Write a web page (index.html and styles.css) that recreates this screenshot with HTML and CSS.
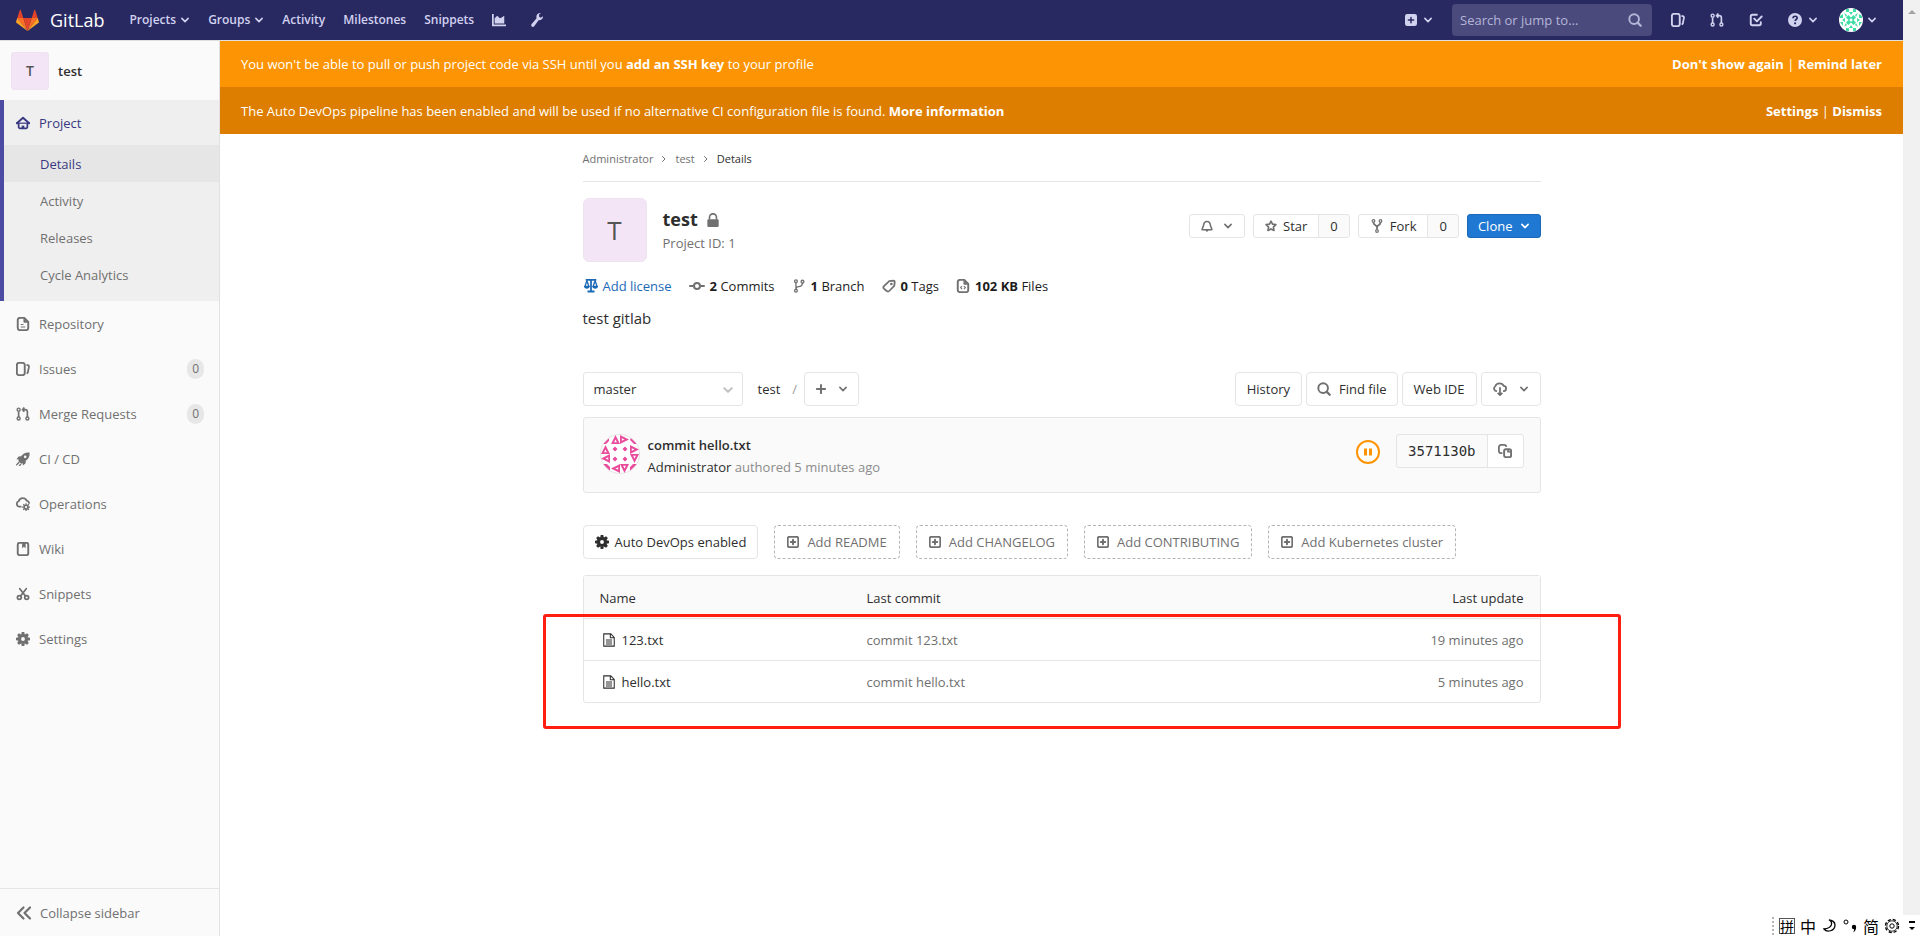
FILE: index.html
```html
<!DOCTYPE html>
<html lang="en">
<head>
<meta charset="utf-8">
<title>Administrator / test · GitLab</title>
<link rel="stylesheet" href="styles.css">
</head>
<body>
<svg class="sprite" aria-hidden="true">
  <symbol id="chevron" viewBox="0 0 16 16"><path d="M3 5.5l5 5 5-5" fill="none" stroke="currentColor" stroke-width="2.6" stroke-linecap="round" stroke-linejoin="round"/></symbol>
  <symbol id="angle-right" viewBox="0 0 16 16"><path d="M5 3l5 5-5 5" fill="none" stroke="currentColor" stroke-width="2" stroke-linecap="round" stroke-linejoin="round"/></symbol>
  <symbol id="plus-solid" viewBox="0 0 16 16"><path fill-rule="evenodd" d="M3 0h10a3 3 0 0 1 3 3v10a3 3 0 0 1-3 3H3a3 3 0 0 1-3-3V3a3 3 0 0 1 3-3zm4 7H4.500a1 1 0 0 0 0 2H7v2.500a1 1 0 0 0 2 0V9h2.500a1 1 0 0 0 0-2H9V4.500a1 1 0 0 0-2 0z"/></symbol>
  <symbol id="plus-square" viewBox="0 0 16 16"><rect x="1" y="1" width="14" height="14" rx="2.500" fill="none" stroke="currentColor" stroke-width="2.400"/><path d="M8 5v6M5 8h6" stroke="currentColor" stroke-width="2.600" stroke-linecap="round"/></symbol>
  <symbol id="search" viewBox="0 0 16 16"><circle cx="7" cy="7" r="5.500" fill="none" stroke="currentColor" stroke-width="2.200"/><path d="M11 11l3.500 3.500" stroke="currentColor" stroke-width="2.600" stroke-linecap="round"/></symbol>
  <symbol id="issues" viewBox="0 0 16 16"><rect x="1" y="1" width="9" height="14" rx="2.500" fill="none" stroke="currentColor" stroke-width="2.200"/><path d="M12 3.200l1.500.4c1 .3 1.500 1 1.300 2L13.500 12l-1.200 1.300" fill="none" stroke="currentColor" stroke-width="2"/></symbol>
  <symbol id="merge" viewBox="0 0 16 16"><g fill="none" stroke="currentColor" stroke-width="1.600"><circle cx="3" cy="3" r="1.700"/><circle cx="3" cy="13.200" r="1.700"/><circle cx="13" cy="13.200" r="1.700"/><path d="M3 5v6.500M13 11.500V5.500c0-1.500-1-2.500-2.500-2.500H8M9.500 .5L7.500 3l2 2.500" stroke-width="1.900"/></g></symbol>
  <symbol id="todo" viewBox="0 0 16 16"><path d="M9 2H4a2 2 0 0 0-2 2v8a2 2 0 0 0 2 2h7.500a2 2 0 0 0 2-2v-1.500M6 6.500l3 3L14.500 4" fill="none" stroke="currentColor" stroke-width="2.200" stroke-linecap="round" stroke-linejoin="round"/></symbol>
  <symbol id="question" viewBox="0 0 16 16"><circle cx="8" cy="8" r="8"/><path d="M5.700 6c.1-1.500 1.100-2.300 2.400-2.300 1.400 0 2.400.8 2.400 2 0 1.700-2.300 1.700-2.300 3.400" fill="none" stroke="#292961" stroke-width="1.900"/><circle cx="8.100" cy="11.800" r="1.250" fill="#292961"/></symbol>
  <symbol id="chart" viewBox="0 0 16 16"><path d="M0 1h2v12h14v2H0zM3 6l3-3 3 3 2-1 3-2v9H3z"/></symbol>
  <symbol id="wrench" viewBox="0 0 16 16"><path d="M14.800 3.800l-2.500 1.700-2-1.400L10.500 1.500 12.500.1C10 -.4 7.500 1.300 7.300 4c0 .7 0 1.400.3 2L1.900 12.600c-.8.900-.6 2.100.1 2.800.9.700 2.100.6 2.800-.3l5-6.800c2.900.3 5.300-1.700 5-4.500z"/></symbol>
  <symbol id="home" viewBox="0 0 16 16"><path d="M1 8.300L8 2l7 6.300" fill="none" stroke="currentColor" stroke-width="2.200" stroke-linecap="round" stroke-linejoin="round"/><path d="M0 7.500h16v1.400H0z"/><path d="M3 8v4.500a1.500 1.500 0 0 0 1.500 1.500h7a1.500 1.500 0 0 0 1.500-1.500V8" fill="none" stroke="currentColor" stroke-width="2"/><path d="M6.500 11h3v3h-3z"/></symbol>
  <symbol id="doc" viewBox="0 0 16 16"><path d="M9.500 1H4.500A2.500 2.500 0 0 0 2 3.500v9A2.500 2.500 0 0 0 4.500 15h7a2.500 2.500 0 0 0 2.500-2.500V5.500z" fill="none" stroke="currentColor" stroke-width="2.200" stroke-linejoin="round"/><path d="M8.500 1v4.500a1 1 0 0 0 1 1H14zM5.500 8h3v1.200h-3zM5.500 10.800h5V12h-5z"/></symbol>
  <symbol id="doc-code" viewBox="0 0 16 16"><path d="M9.500 1H4.500A2.500 2.500 0 0 0 2 3.500v9A2.500 2.500 0 0 0 4.500 15h7a2.500 2.500 0 0 0 2.500-2.500V5.500z" fill="none" stroke="currentColor" stroke-width="2.200" stroke-linejoin="round"/><path d="M8.500 1v4.500a1 1 0 0 0 1 1H14z"/><path d="M7 8l-1.800 1.800L7 11.600M9 8l1.800 1.800L9 11.600" fill="none" stroke="currentColor" stroke-width="1.200"/></symbol>
  <symbol id="rocket" viewBox="0 0 16 16"><path fill-rule="evenodd" d="M15.500.6c-4-.5-7.500 1-9.700 4.300L3 5 .5 8.200l2.700.3-.5 1.700 3.200 3.200 1.700-.5.300 2.400L11 12.800l.1-2.700c3.300-2.200 4.900-5.500 4.400-9.500zM10.500 4a1.500 1.500 0 1 1 0 3 1.500 1.500 0 0 1 0-3z"/><path d="M.8 14.500l2.700-2.700M4 15.500l1.300-1.300" stroke="currentColor" stroke-width="1.500" stroke-linecap="round"/></symbol>
  <symbol id="operations" viewBox="0 0 16 16"><path d="M5.500 11H4A3.200 3.200 0 0 1 3 4.800C3.800 2.500 5.800 1 8 1.200c2 .1 3.500 1.200 4.200 3 1.500.2 2.500 1.200 2.800 2.600" fill="none" stroke="currentColor" stroke-width="2" stroke-linecap="round"/><circle cx="11.500" cy="11.500" r="2.300" fill="none" stroke="currentColor" stroke-width="2"/><path d="M11.500 7v9M7 11.500h1.500M14.500 11.500H16M8.300 8.300l1 1M13.700 13.700l1 1M14.700 8.300l-1 1M9.300 13.700l-1 1" stroke="currentColor" stroke-width="1.500" stroke-dasharray="1.500 6"/></symbol>
  <symbol id="book" viewBox="0 0 16 16"><rect x="2" y="1" width="12" height="14" rx="2" fill="none" stroke="currentColor" stroke-width="2.200"/><path d="M7 1h4v6L9 5.500 7 7z"/></symbol>
  <symbol id="scissors" viewBox="0 0 16 16"><g fill="none" stroke="currentColor" stroke-width="2"><circle cx="3.800" cy="12" r="2.200"/><circle cx="12.200" cy="12" r="2.200"/><path d="M4.300 2l6.500 8.300M11.700 2L5.200 10.300" stroke-linecap="round"/></g></symbol>
  <symbol id="gear" viewBox="0 0 16 16"><circle cx="8" cy="8" r="4" fill="none" stroke="currentColor" stroke-width="3.600"/><path d="M6.500 0h3l.5 3H6zM6.500 16h3l.5-3H6zM0 6.500v3l3 .5V6zM16 6.500v3l-3 .5V6zM1.300 3.400l2.100-2.100L6 3 3 6zM14.700 12.600l-2.100 2.100L10 13l3-3zM12.600 1.300l2.100 2.100L13 6l-3-3zM3.400 14.700l-2.100-2.100L3 10l3 3z"/></symbol>
  <symbol id="collapse" viewBox="0 0 16 16"><path d="M7.500 2.500L2 8l5.500 5.500M14 2.500L8.500 8l5.500 5.500" fill="none" stroke="currentColor" stroke-width="2.200" stroke-linecap="round" stroke-linejoin="round"/></symbol>
  <symbol id="lock" viewBox="0 0 16 16"><path d="M4 7.500V5a4 4 0 0 1 8 0v2.500" fill="none" stroke="currentColor" stroke-width="1.900"/><rect x="1.500" y="7" width="13" height="9" rx="1.500"/></symbol>
  <symbol id="scale" viewBox="0 0 16 16"><path d="M2 0h12v2H2zM7 1h2v13H7zM4 13h8v2.500H4z"/><g fill="none" stroke="currentColor" stroke-width="1.500"><path d="M3.300 2L1 8.500h4.600zM12.700 2l-2.300 6.500H15z"/></g><path d="M0 8h6.500c0 2-1.300 3.200-3.200 3.200S0 10 0 8zM9.500 8H16c0 2-1.300 3.200-3.200 3.200S9.500 10 9.500 8z"/></symbol>
  <symbol id="commit" viewBox="0 0 16 16"><circle cx="8" cy="8" r="3" fill="none" stroke="currentColor" stroke-width="2"/><path d="M1 8h3M12 8h3" stroke="currentColor" stroke-width="2" stroke-linecap="round"/></symbol>
  <symbol id="branch" viewBox="0 0 16 16"><g fill="none" stroke="currentColor" stroke-width="1.500"><circle cx="4.500" cy="2.500" r="1.600"/><circle cx="12" cy="3" r="1.600"/><circle cx="4.500" cy="13.500" r="1.600"/><path d="M4.500 4v8M12 4.500c0 3-2 4-4.500 4.300-2 .2-3 1-3 3"/></g></symbol>
  <symbol id="tag" viewBox="0 0 16 16"><path d="M8.300 2.500L13 1.800c.9 0 1.600.6 1.600 1.500L14 7.700l-5.800 6c-.8.8-2 .8-2.800 0L2.200 10.900c-.8-.8-.8-2 0-2.800z" fill="none" stroke="currentColor" stroke-width="2"/><circle cx="10.700" cy="5.700" r="1.500"/></symbol>
  <symbol id="bell" viewBox="0 0 16 16"><path d="M8 2C4.800 2 3.600 4.500 3.300 7.500 3 9.800 1.500 10.500 1.500 13h13c0-2.500-1.500-3.200-1.800-5.500C12.400 4.500 11.200 2 8 2z" fill="none" stroke="currentColor" stroke-width="2.100" stroke-linejoin="round"/><path d="M6 13h4c0 1.500-.8 2.500-2 2.500S6 14.500 6 13z"/></symbol>
  <symbol id="star" viewBox="0 0 16 16"><path d="M8 1.500l2 4 4.500.7-3.300 3.200.8 4.600-4-2.100L4 14l.8-4.600L1.500 6.200 6 5.500z" fill="none" stroke="currentColor" stroke-width="2.200" stroke-linejoin="round"/></symbol>
  <symbol id="fork" viewBox="0 0 16 16"><g fill="none" stroke="currentColor" stroke-width="1.400"><circle cx="4" cy="2.300" r="1.500"/><circle cx="12" cy="2.300" r="1.500"/><circle cx="8" cy="13.700" r="1.500"/><path d="M4 4c0 3.500 4 3 4 5.500V12M12 4c0 3.500-4 3-4 5.500" stroke-width="2"/></g></symbol>
  <symbol id="cloud-down" viewBox="0 0 16 16"><path d="M4.500 10.500H4A3 3 0 0 1 2.600 5C3.200 2.800 5.300 1.500 7.500 1.500c2.300 0 4 1.200 4.700 3 1.700.2 2.800 1.400 2.800 3 0 1.800-1.200 3-3 3h-.5M8 6v9M5.300 12.500L8 15l2.700-2.500" fill="none" stroke="currentColor" stroke-width="2" stroke-linejoin="round"/></symbol>
  <symbol id="plus" viewBox="0 0 16 16"><path d="M8 2.500v11M2.500 8h11" stroke="currentColor" stroke-width="2.600" stroke-linecap="round"/></symbol>
  <symbol id="copy" viewBox="0 0 16 16"><path d="M5 10.500H3.500A2.500 2.500 0 0 1 1 8V3.500A2.500 2.500 0 0 1 3.500 1H7a2.500 2.500 0 0 1 2.500 2.200" fill="none" stroke="currentColor" stroke-width="2"/><rect x="7" y="6" width="8" height="9" rx="2" fill="none" stroke="currentColor" stroke-width="2.200"/><path d="M10.500 5.500v4.300h4.500z"/></symbol>
  <symbol id="file" viewBox="0 0 16 16"><path d="M2 1h8l4 4v10H2zM9.500 1v4.500H14M4.500 8h7M4.500 10.300h7M4.500 12.600h7" fill="none" stroke="currentColor" stroke-width="1.200"/></symbol>
  <symbol id="tri" viewBox="0 0 10 10"><path fill-rule="evenodd" d="M5 0l5 10H0zM5 5L3.500 8h3z"/></symbol>
</svg>

<div class="window">
  <div class="app">
    <header class="navbar">
      <a class="brand" href="#">
        <svg class="tanuki" viewBox="0 0 36 36"><path fill="#e24329" d="M2 14l9.400 9v-9zM34 14l-9.400 9v-9zM18 34.400L24.400 14H11.600z"/><path fill="#fc6d26" d="M18 34.400L11.400 14H2zM18 34.400L24.600 14H34z"/><path fill="#fca326" d="M2 14L.1 20c-.2.600 0 1.200.500 1.500L18 34.400zM34 14l1.900 6c.2.600 0 1.200-.5 1.500L18 34.400z"/><path fill="#e24329" d="M2 14h9.400L7.400 1.600c-.2-.6-1.200-.6-1.400 0zM34 14h-9.400l4-12.400c.2-.6 1.200-.6 1.400 0z"/></svg>
        <span>GitLab</span>
      </a>
      <nav class="nav-main">
        <button class="nav-link">Projects<svg class="chev"><use href="#chevron"/></svg></button>
        <button class="nav-link">Groups<svg class="chev"><use href="#chevron"/></svg></button>
        <a class="nav-link" href="#">Activity</a>
        <a class="nav-link" href="#">Milestones</a>
        <a class="nav-link" href="#">Snippets</a>
        <a class="nav-link nav-icon" href="#" aria-label="Instance statistics"><svg class="i14"><use href="#chart"/></svg></a>
        <a class="nav-link nav-icon" href="#" aria-label="Admin area"><svg class="i14"><use href="#wrench"/></svg></a>
      </nav>
      <div class="nav-right">
        <button class="nav-btn" aria-label="New"><svg class="i12"><use href="#plus-solid"/></svg><svg class="chev"><use href="#chevron"/></svg></button>
        <label class="search"><input type="text" placeholder="Search or jump to…" aria-label="Search or jump to"><svg class="i14"><use href="#search"/></svg></label>
        <a class="nav-btn" href="#" aria-label="Issues"><svg class="i14"><use href="#issues"/></svg></a>
        <a class="nav-btn" href="#" aria-label="Merge requests"><svg class="i14"><use href="#merge"/></svg></a>
        <a class="nav-btn" href="#" aria-label="Todos"><svg class="i14"><use href="#todo"/></svg></a>
        <button class="nav-btn" aria-label="Help"><svg class="i14"><use href="#question"/></svg><svg class="chev"><use href="#chevron"/></svg></button>
        <button class="nav-btn user" aria-label="Account">
          <svg class="user-avatar" viewBox="0 0 24 24"><circle cx="12" cy="12" r="12" fill="#fff"/><g fill="#40dca5"><path d="M7 1h3v3H7zM14 1h3v3h-3zM7 20h3v3H7zM14 20h3v3h-3zM1 8l3-2v4H1zM1 14h3v4zM23 8l-3-2v4h3zM23 14h-3v4zM5 5l3 2-1 2zM19 5l-3 2 1 2zM5 19l3-2-1-2zM19 19l-3-2 1-2zM10 4h4l-2 3zM10 20h4l-2-3zM3 12l3-2v4zM21 12l-3-2v4z"/><path d="M7 9.500L9.500 7 12 9.500 14.500 7 17 9.500 14.500 12 17 14.500 14.500 17 12 14.500 9.500 17 7 14.500 9.500 12z"/></g><circle cx="12" cy="12" r="1.500" fill="#fff"/></svg>
          <svg class="chev"><use href="#chevron"/></svg></button>
      </div>
    </header>

    <div class="layout">
      <aside class="sidebar">
        <a class="context" href="#"><span class="avatar avatar-sm">T</span><span>test</span></a>
        <div class="section-active">
          <a class="side-link current" href="#"><svg class="i14"><use href="#home"/></svg>Project</a>
          <a class="sub-link current" href="#">Details</a>
          <a class="sub-link" href="#">Activity</a>
          <a class="sub-link" href="#">Releases</a>
          <a class="sub-link" href="#">Cycle Analytics</a>
        </div>
        <a class="side-link" href="#"><svg class="i14"><use href="#doc"/></svg>Repository</a>
        <a class="side-link" href="#"><svg class="i14"><use href="#issues"/></svg>Issues<span class="count">0</span></a>
        <a class="side-link" href="#"><svg class="i14"><use href="#merge"/></svg>Merge Requests<span class="count">0</span></a>
        <a class="side-link" href="#"><svg class="i14"><use href="#rocket"/></svg>CI / CD</a>
        <a class="side-link" href="#"><svg class="i14"><use href="#operations"/></svg>Operations</a>
        <a class="side-link" href="#"><svg class="i14"><use href="#book"/></svg>Wiki</a>
        <a class="side-link" href="#"><svg class="i14"><use href="#scissors"/></svg>Snippets</a>
        <a class="side-link" href="#"><svg class="i14"><use href="#gear"/></svg>Settings</a>
        <button class="collapse"><svg class="i16"><use href="#collapse"/></svg>Collapse sidebar</button>
      </aside>

      <main class="content">
        <div class="banner">
          <p>You won't be able to pull or push project code via SSH until you <a href="#">add an SSH key</a> to your profile</p>
          <p><a href="#">Don't show again</a> | <a href="#">Remind later</a></p>
        </div>
        <div class="banner banner-dark">
          <p>The Auto DevOps pipeline has been enabled and will be used if no alternative CI configuration file is found. <a href="#">More information</a></p>
          <p><a href="#">Settings</a> | <a href="#">Dismiss</a></p>
        </div>

        <div class="container">
          <nav class="breadcrumb">
            <a href="#">Administrator</a><svg class="i8"><use href="#angle-right"/></svg>
            <a href="#">test</a><svg class="i8"><use href="#angle-right"/></svg>
            <a class="here" href="#">Details</a>
          </nav>

          <section class="project-head">
            <span class="avatar avatar-lg">T</span>
            <div class="title">
              <h1>test<svg class="i14"><use href="#lock"/></svg></h1>
              <p>Project ID: 1</p>
            </div>
            <div class="actions">
              <button class="btn sm bell" aria-label="Notifications"><svg class="i12"><use href="#bell"/></svg><svg class="chev"><use href="#chevron"/></svg></button>
              <div class="group"><button class="btn sm"><svg class="i12"><use href="#star"/></svg>Star</button><a class="btn sm num" href="#">0</a></div>
              <div class="group"><button class="btn sm"><svg class="i14"><use href="#fork"/></svg>Fork</button><a class="btn sm num" href="#">0</a></div>
              <button class="btn sm primary">Clone<svg class="chev"><use href="#chevron"/></svg></button>
            </div>
          </section>

          <nav class="stats">
            <a class="license" href="#"><svg class="i14"><use href="#scale"/></svg>Add license</a>
            <a href="#"><svg class="i16"><use href="#commit"/></svg><span><b>2</b> Commits</span></a>
            <a href="#"><svg class="i14"><use href="#branch"/></svg><span><b>1</b> Branch</span></a>
            <a href="#"><svg class="i14"><use href="#tag"/></svg><span><b>0</b> Tags</span></a>
            <a href="#"><svg class="i14"><use href="#doc-code"/></svg><span><b>102 KB</b> Files</span></a>
          </nav>
          <p class="description">test gitlab</p>

          <section class="tree-controls">
            <label class="branch"><select aria-label="Branch"><option>master</option></select><svg class="i12"><use href="#chevron"/></svg></label>
            <a class="crumb" href="#">test</a><span class="slash">/</span>
            <button class="btn add" aria-label="Add to tree"><svg class="i12"><use href="#plus"/></svg><svg class="chev"><use href="#chevron"/></svg></button>
            <div class="tree-actions">
              <a class="btn" href="#">History</a>
              <a class="btn find" href="#"><svg class="i14"><use href="#search"/></svg>Find file</a>
              <a class="btn" href="#">Web IDE</a>
              <button class="btn download" aria-label="Download"><svg class="i14"><use href="#cloud-down"/></svg><svg class="chev"><use href="#chevron"/></svg></button>
            </div>
          </section>

          <section class="commit">
            <svg class="commit-avatar" viewBox="0 0 40 40"><defs><clipPath id="round"><circle cx="20" cy="20" r="19.500"/></clipPath></defs><circle cx="20" cy="20" r="19.500" fill="#fff" stroke="#e3e3e3"/>
              <g clip-path="url(#round)" fill="#e94c9c"><use href="#tri" x="11" y="1" width="9" height="9"/><use href="#tri" x="20" y="1" width="9" height="9" transform="rotate(90 24.500 5.500)"/><use href="#tri" x="1" y="11" width="9" height="9"/><use href="#tri" x="30" y="11" width="9" height="9" transform="rotate(90 34.500 15.500)"/><use href="#tri" x="1" y="20" width="9" height="9" transform="rotate(-90 5.500 24.500)"/><use href="#tri" x="30" y="20" width="9" height="9" transform="rotate(180 34.500 24.500)"/><use href="#tri" x="11" y="30" width="9" height="9" transform="rotate(-90 15.500 34.500)"/><use href="#tri" x="20" y="30" width="9" height="9" transform="rotate(180 24.500 34.500)"/>
              <path d="M3 10l6-6v3l-3 3zM31 4l6 6h-3l-4-4zM3 30l7 7v-4l-3-3zM37 30l-7 7v-4l3-3zM15 12.500l2.500 2.500-2.500 2.500-2.500-2.500zM25 12.500l2.500 2.500-2.500 2.500-2.500-2.500zM15 22.500l2.500 2.500-2.500 2.500-2.500-2.500zM25 22.500l2.500 2.500-2.500 2.500-2.500-2.500z"/></g></svg>
            <div class="commit-text">
              <a class="commit-title" href="#">commit hello.txt</a>
              <p><a href="#">Administrator</a> authored 5 minutes ago</p>
            </div>
            <a class="status" href="#" aria-label="Pipeline pending"><svg viewBox="0 0 24 24"><circle cx="12" cy="12" r="11" fill="#fff" stroke="#fc9403" stroke-width="2"/><path fill="#fc9403" d="M8 8.500h3v7H8zM13 8.500h3v7h-3z"/></svg></a>
            <div class="group sha"><span class="btn hash">3571130b</span><button class="btn copy" aria-label="Copy commit SHA"><svg class="i14"><use href="#copy"/></svg></button></div>
          </section>

          <nav class="quick">
            <a class="btn devops" href="#"><svg class="i14"><use href="#gear"/></svg>Auto DevOps enabled</a>
            <a class="btn dashed" href="#"><svg class="i12"><use href="#plus-square"/></svg>Add README</a>
            <a class="btn dashed" href="#"><svg class="i12"><use href="#plus-square"/></svg>Add CHANGELOG</a>
            <a class="btn dashed" href="#"><svg class="i12"><use href="#plus-square"/></svg>Add CONTRIBUTING</a>
            <a class="btn dashed" href="#"><svg class="i12"><use href="#plus-square"/></svg>Add Kubernetes cluster</a>
          </nav>

          <div class="files">
            <table>
              <thead><tr><th class="name">Name</th><th>Last commit</th><th class="when">Last update</th></tr></thead>
              <tbody>
                <tr><td><a class="file" href="#"><svg class="i14"><use href="#file"/></svg>123.txt</a></td><td><a href="#">commit 123.txt</a></td><td class="when">19 minutes ago</td></tr>
                <tr><td><a class="file" href="#"><svg class="i14"><use href="#file"/></svg>hello.txt</a></td><td><a href="#">commit hello.txt</a></td><td class="when">5 minutes ago</td></tr>
              </tbody>
            </table>
            <div class="highlight"></div>
          </div>
        </div>
      </main>
    </div>
  </div>
  <div class="scrollbar"><svg viewBox="0 0 8 4"><path d="M0 4l4-4 4 4z"/></svg></div>
  <div class="ime">
    <span class="grip"></span><span class="pin">拼</span><span>中</span>
    <svg class="i16" viewBox="0 0 16 16"><path d="M8 2c4 2 4 8-5 9 3 4 11 2 11-4 0-3-3-5-6-5z" fill="none" stroke="#000" stroke-width="1.300"/></svg>
    <svg class="i16" viewBox="0 0 16 16"><circle cx="4" cy="4" r="2" fill="none" stroke="#000"/><circle cx="12" cy="9" r="2.200"/><path d="M14 9c.3 2.500-.8 4.500-3 5.500 1-1.200 1.300-2.500 1-4z"/></svg>
    <span>简</span>
    <svg class="i16" viewBox="0 0 16 16"><circle cx="8" cy="8" r="6.500" fill="none" stroke="#000" stroke-width="1.400" stroke-dasharray="3.200 1.900"/><circle cx="8" cy="8" r="5.200" fill="none" stroke="#000" stroke-width=".8"/><circle cx="8" cy="8" r="2.200" fill="none" stroke="#000"/></svg>
    <svg class="ime-more" viewBox="0 0 6 10"><path d="M0 0h6v2H0zM0 6h6L3 9z"/></svg>
  </div>
</div>
</body>
</html>
```
FILE: styles.css
```css
* { box-sizing: border-box; }
body { margin: 0; font: 13px/20px "Open Sans", "Noto Sans", sans-serif; color: #2e2e2e; background: #fff; }
p, h1 { margin: 0; }
a { color: inherit; text-decoration: none; }
button, input, select { font: inherit; color: inherit; margin: 0; }
button { cursor: pointer; }
svg { fill: currentColor; flex: none; }
.sprite { display: none; }
.i8 { width: 8px; height: 8px; }
.i12 { width: 12px; height: 12px; }
.i14 { width: 14px; height: 14px; }
.i16 { width: 16px; height: 16px; }
.chev { width: 10px; height: 10px; }

.window { position: relative; display: flex; min-height: 100vh; }
.app { flex: 1; display: flex; flex-direction: column; min-width: 0; }
.scrollbar { width: 17px; margin-bottom: 21px; padding-top: 7px; background: #f1f1f1; color: #a3a3a3; text-align: center; line-height: 4px; }
.scrollbar svg { width: 8px; height: 4px; }

.navbar { display: flex; align-items: center; height: 41px; padding: 0 26px 0 16px; background: #292961; color: #d1d1f0; border-bottom: 1px solid #dfdfdf; }
.brand { display: flex; align-items: center; gap: 11px; color: #fff; font-size: 18px; }
.tanuki { width: 23px; height: 23px; }
.nav-main { display: flex; align-items: center; gap: 18px; margin-left: 25px; font-size: 12px; font-weight: 600; }
.nav-link { display: flex; align-items: center; gap: 4px; padding: 0; border: 0; background: none; }
.nav-main .nav-icon:last-child { margin-left: 6px; }
.nav-right { display: flex; align-items: center; margin-left: auto; }
.nav-btn { display: flex; align-items: center; gap: 6px; padding: 0; border: 0; background: none; margin-left: 25px; }
.search { display: flex; align-items: center; width: 200px; height: 32px; margin: 0 -6px 0 19px; padding: 0 10px 0 8px; border-radius: 4px; background: #4a4a7d; color: #b5b5d8; }
.search input { flex: 1; min-width: 0; padding: 0; border: 0; outline: 0; background: none; }
.search input::placeholder { color: #b5b5d8; opacity: 1; }
.nav-btn.user { gap: 4px; margin-left: 21px; }
.user-avatar { width: 24px; height: 24px; }

.layout { flex: 1; display: flex; }
.sidebar { display: flex; flex-direction: column; width: 220px; background: #fafafa; border-right: 1px solid #e1e1e1; color: #707070; }
.context { display: flex; align-items: center; gap: 9px; height: 59px; padding-left: 11px; font-weight: 600; color: #2e2e2e; }
.avatar { display: grid; place-items: center; background: #f3e5f5; color: #555; border: 1px solid #eee3f0; }
.avatar-sm { width: 38px; height: 38px; border-radius: 3px; font-size: 14px; }
.avatar-lg { width: 64px; height: 64px; border-radius: 6px; font-size: 26px; }
.section-active { padding-bottom: 8px; background: #efefef; box-shadow: inset 4px 0 #4b4ba3; }
.side-link { display: flex; align-items: center; gap: 9px; height: 45px; padding: 0 15px 0 16px; }
.sub-link { display: flex; align-items: center; height: 37px; margin-left: 4px; padding-left: 36px; }
.current { color: #393982; font-weight: 500; }
.sub-link.current { background: #e6e6e6; }
.count { margin-left: auto; padding: 0 5px; border-radius: 10px; background: #e7e7e7; font-size: 12px; }
.collapse { display: flex; align-items: center; gap: 8px; height: 48px; margin-top: auto; padding: 0 16px; border: 0; border-top: 1px solid #e5e5e5; background: none; }

.content { flex: 1; min-width: 0; }
.banner { display: flex; justify-content: space-between; align-items: center; height: 46px; padding: 0 21px; background: #fc9403; color: #fff; }
.banner-dark { height: 47px; background: #de7e00; }
.banner a { font-weight: 700; }
.container { max-width: 990px; margin: 0 auto; padding: 0 16px; }
.breadcrumb { display: flex; align-items: center; height: 48px; padding-top: 2px; gap: 7px; border-bottom: 1px solid #e5e5e5; color: #707070; font-size: 11px; }
.breadcrumb .here { color: #2e2e2e; font-weight: 500; }

.project-head { display: flex; margin-top: 16px; }
.title { margin: 8px 0 0 16px; color: #707070; }
.title h1 { display: flex; align-items: center; gap: 8px; color: #2e2e2e; font-size: 18px; line-height: 27px; font-weight: 700; }
.title h1 svg { color: #707070; }
.actions { display: flex; align-items: center; gap: 8px; height: 24px; margin: 16px 0 0 auto; }
.btn { display: flex; align-items: center; justify-content: center; height: 34px; padding: 0 11px; border: 1px solid #e5e5e5; border-radius: 4px; background: #fff; white-space: nowrap; }
.btn svg { color: #707070; }
.btn.sm { height: 24px; gap: 6px; border-radius: 3px; }
.btn.bell { gap: 10px; }
.group { display: flex; }
.group .btn:first-child { border-radius: 3px 0 0 3px; }
.group .btn:last-child { margin-left: -1px; border-radius: 0 3px 3px 0; }
.num { background: #fafafa; }
.btn.primary { gap: 7px; background: #1f78d1; border-color: #1b69b6; color: #fff; padding: 0 10px; }
.primary svg { color: #fff; }

.stats { display: flex; gap: 17px; height: 20px; margin-top: 14px; padding-left: 1px; color: #1c1c1c; }
.stats a { display: flex; align-items: center; gap: 5px; }
.stats svg { color: #707070; }
.stats .license, .stats .license svg { color: #1b69b6; }
.description { margin-top: 12px; font-size: 15px; }

.tree-controls { display: flex; align-items: center; height: 34px; margin-top: 44px; }
.branch { position: relative; width: 160px; }
.branch select { width: 100%; height: 34px; padding: 0 10px; border: 1px solid #e5e5e5; border-radius: 3px; background: #fff; appearance: none; }
.branch svg { position: absolute; right: 9px; top: 12px; color: #bfbfbf; pointer-events: none; }
.crumb { margin-left: 15px; }
.slash { margin: 0 7px 0 12px; color: #999; }
.add { gap: 11px; padding: 0 10px; }
.tree-actions { display: flex; gap: 4px; margin-left: auto; }
.find { gap: 8px; padding: 0 10px; }
.download { gap: 12px; }

.commit { display: flex; align-items: flex-start; margin-top: 11px; padding: 16px 16px 14px; border: 1px solid #e5e5e5; border-radius: 3px; background: #fafafa; }
.commit-avatar { width: 40px; height: 40px; }
.commit-text { margin-left: 8px; line-height: 22px; color: #8c8c8c; }
.commit-text a { color: #2e2e2e; }
.commit-text .commit-title { font-weight: 600; }
.status { width: 24px; height: 24px; margin: 6px 0 0 auto; }
.status svg { display: block; }
.sha { margin-left: 16px; }
.hash { background: #fafafa; font-family: "DejaVu Sans Mono", monospace; font-size: 14px; }
.copy { width: 37px; }

.quick { display: flex; gap: 16px; margin-top: 32px; }
.devops { gap: 6px; }
.btn.devops svg { color: #2e2e2e; }
.dashed { gap: 8px; padding: 0 12px; border: 1px dashed #b5b5b5; color: #707070; }

.files { position: relative; margin-top: 16px; }
.files table { width: 100%; border: 1px solid #e5e5e5; border-radius: 3px; border-spacing: 0; color: #707070; }
.files th, .files td { height: 42px; padding: 0 16px; text-align: left; font-weight: 400; }
.files th { background: #fafafa; color: #2e2e2e; padding-top: 2px; }
.files td { border-top: 1px solid #e5e5e5; }
.files .name { width: 267px; }
.files .when { text-align: right; }
.file { display: flex; align-items: center; gap: 6px; padding-left: 2px; color: #2e2e2e; }
.highlight { position: absolute; inset: 39px -80px -26px -40px; border: 3px solid #ff1e10; border-radius: 3px; pointer-events: none; }

.ime { position: absolute; right: 0; bottom: 0; display: flex; align-items: center; gap: 5px; width: 148px; height: 20px; padding-right: 5px; background: #fff; color: #000; font: 16px/18px "Noto Sans CJK SC", sans-serif; }
.grip { height: 18px; border-left: 2px dotted #b5b5b5; }
.pin { border: 1px solid #555; font-size: 14px; line-height: 14px; }
.ime-more { width: 6px; height: 10px; margin-left: auto; }
```
